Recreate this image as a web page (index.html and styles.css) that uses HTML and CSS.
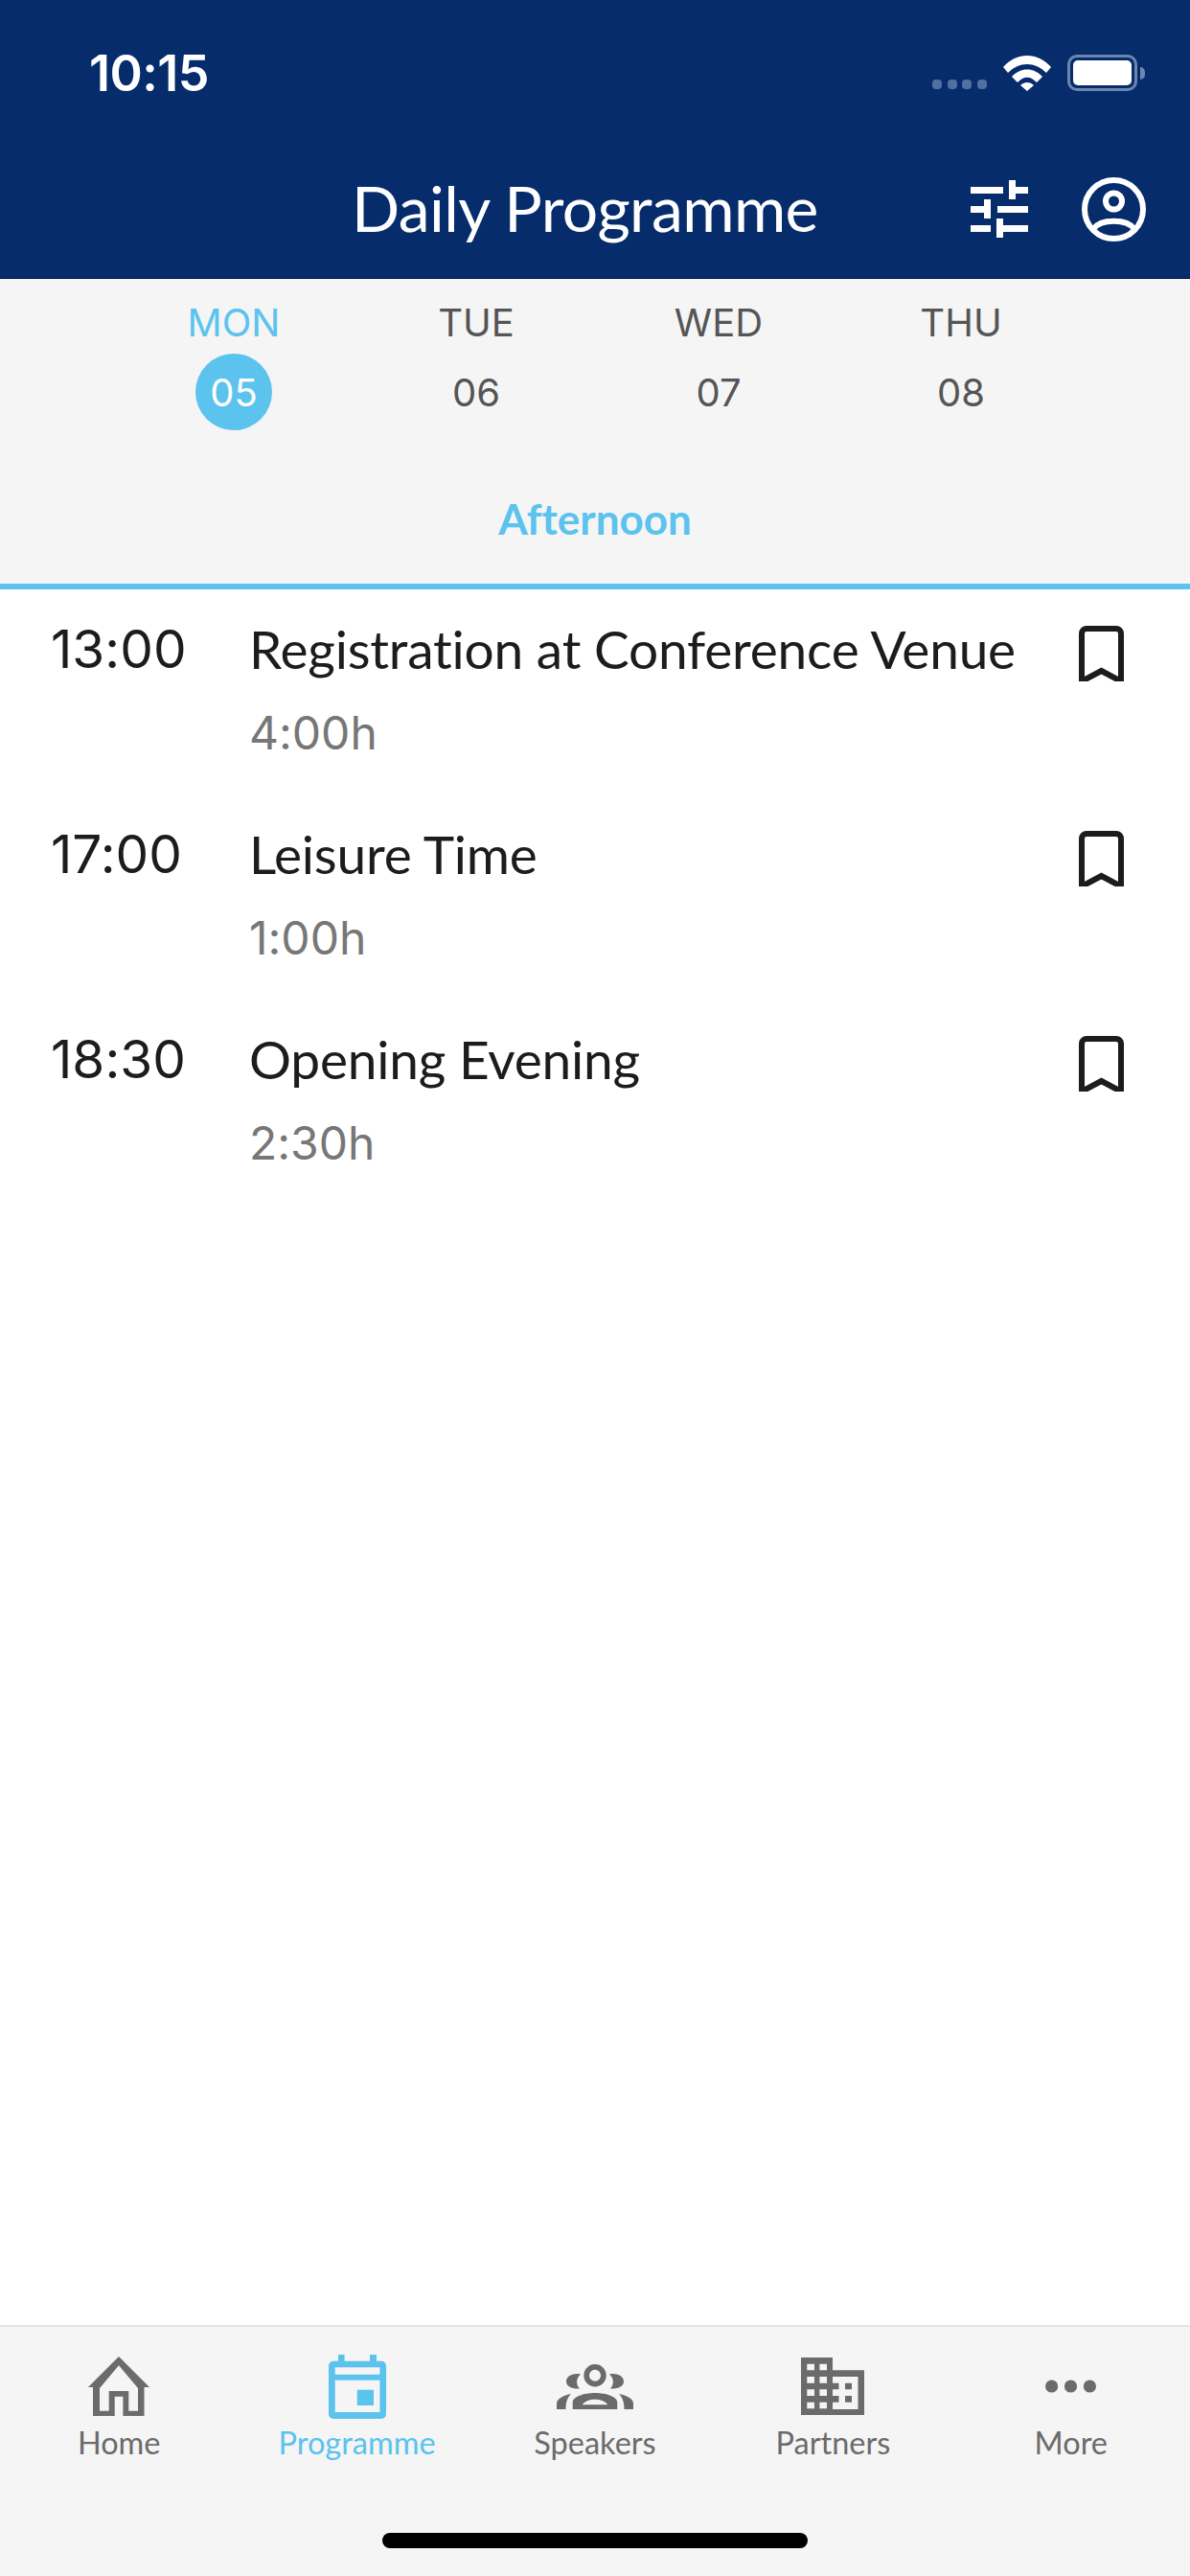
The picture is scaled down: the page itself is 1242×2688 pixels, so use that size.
FILE: index.html
```html
<!DOCTYPE html>
<html lang="en">

<head>
    <meta charset="UTF-8">
    <meta name="viewport" content="width=device-width, initial-scale=1.0">
    <title>Daily Programme</title>
    <link rel="stylesheet" href="styles.css">
</head>

<body>
    <div class="app">
        <!-- Header -->
        <header class="header">
            <div class="status-bar">
                <span class="clock">10:15</span>
                <div class="status-icons">
                    <div class="signal"><i></i><i></i><i></i><i></i></div>
                    <svg class="wifi" viewBox="0 0 50 37">
                        <path d="M0 12 C14 -4 36 -4 50 12 L45 18 C33 6 17 6 5 18 Z" />
                        <path d="M9 22 C18 12 32 12 41 22 L35 28 C28 21 22 21 15 28 Z" />
                        <path d="M18 31 C22 27 28 27 32 31 L25 37 Z" />
                    </svg>
                    <div class="battery"><div class="battery-fill"></div></div>
                    <div class="battery-tip"></div>
                </div>
            </div>
            <div class="title-bar">
                <h1>Daily Programme</h1>
                <svg class="filter-icon" viewBox="0 0 60 60">
                    <path d="M0 7h34v7H0zM40 0h7v7h13v7H47v6h-7z" />
                    <path d="M14 20h7v20h-7v-6H0v-7h14zM28 27h32v7H28z" />
                    <path d="M0 47h21v7H0zM27 40h7v7h26v7H34v6h-7z" />
                </svg>
                <svg class="user-icon" viewBox="0 0 67 67">
                    <circle cx="33.5" cy="33.5" r="30.5" />
                    <circle cx="33.5" cy="25" r="8.5" />
                    <path d="M12 54 C20 43 47 43 55 54" />
                </svg>
            </div>
        </header>

        <!-- Days -->
        <section class="days">
            <div class="day-row">
                <div class="day active"><span class="day-name">MON</span><span class="day-num">05</span></div>
                <div class="day"><span class="day-name">TUE</span><span class="day-num">06</span></div>
                <div class="day"><span class="day-name">WED</span><span class="day-num">07</span></div>
                <div class="day"><span class="day-name">THU</span><span class="day-num">08</span></div>
            </div>
            <div class="tab">Afternoon</div>
        </section>

        <!-- Sessions -->
        <main class="sessions">
            <div class="session">
                <div class="time">13:00</div>
                <div class="info">
                    <div class="session-title">Registration at Conference Venue</div>
                    <div class="duration">4:00h</div>
                </div>
                <svg class="bookmark" viewBox="0 0 47 58"><path d="M3 58V8a5 5 0 0 1 5-5h31a5 5 0 0 1 5 5v50L23.500 47z" /></svg>
            </div>
            <div class="session">
                <div class="time">17:00</div>
                <div class="info">
                    <div class="session-title">Leisure Time</div>
                    <div class="duration">1:00h</div>
                </div>
                <svg class="bookmark" viewBox="0 0 47 58"><path d="M3 58V8a5 5 0 0 1 5-5h31a5 5 0 0 1 5 5v50L23.500 47z" /></svg>
            </div>
            <div class="session">
                <div class="time">18:30</div>
                <div class="info">
                    <div class="session-title">Opening Evening</div>
                    <div class="duration">2:30h</div>
                </div>
                <svg class="bookmark" viewBox="0 0 47 58"><path d="M3 58V8a5 5 0 0 1 5-5h31a5 5 0 0 1 5 5v50L23.500 47z" /></svg>
            </div>
        </main>

        <!-- Tab bar -->
        <nav class="tabbar">
            <div class="tab-items">
                <div class="tab-item">
                    <div class="icon-box">
                        <svg class="icon-home" viewBox="0 0 64 62">
                            <path fill-rule="evenodd" d="M32 0L64 32H58.500V62H36.400V41.700H27.700V62H5V32H0Z M32 9.300L12 33V56.700H21.700V36H42.300V56.700H52V33Z" />
                        </svg>
                    </div>
                    <span>Home</span>
                </div>
                <div class="tab-item active">
                    <div class="icon-box">
                        <svg class="icon-calendar" viewBox="0 0 60 67">
                            <path fill-rule="evenodd" d="M10 0h6.600v6.700H43V0h7v6.700h5a5 5 0 0 1 5 5V62a5 5 0 0 1-5 5H5a5 5 0 0 1-5-5V11.700a5 5 0 0 1 5-5h5z M6.700 13.300v7.400h46.700v-7.400z M6.700 26.700V60h46.700V26.700z" />
                            <path d="M29.700 36.700H47V53H29.700z" />
                        </svg>
                    </div>
                    <span>Programme</span>
                </div>
                <div class="tab-item">
                    <div class="icon-box">
                        <svg class="icon-speakers" viewBox="0 0 80 47">
                            <path fill-rule="evenodd" d="M40 0a11.700 11.700 0 1 1 0 23.400 11.700 11.700 0 0 1 0-23.400z M40 5.700a6 6 0 1 0 0 12 6 6 0 0 0 0-12z" />
                            <path d="M25 10.500C18 9 10 12 10 18c0 5 6 8 14 7.500-4-4.500-4-10.500 1-15z" />
                            <path d="M55 10.500C62 9 70 12 70 18c0 5-6 8-14 7.500 4-4.500 4-10.500-1-15z" />
                            <path fill-rule="evenodd" d="M16.700 47V40C16.700 34 28 30 40 30s23.300 4 23.300 10v7z M26.700 42.300C32 35 48 35 53.300 42.300z" />
                            <path d="M0 47v-6c0-4 5-8 15-10-4 4-5.500 9-5.500 16z" />
                            <path d="M80 47v-6c0-4-5-8-15-10 4 4 5.500 9 5.500 16z" />
                        </svg>
                    </div>
                    <span>Speakers</span>
                </div>
                <div class="tab-item">
                    <div class="icon-box">
                        <svg class="icon-partners" viewBox="0 0 66 60">
                            <path fill-rule="evenodd" d="M0 0H33V13.300H66V60H0Z M6.300 6.700v6.600H14V6.700z M19.400 6.700v6.600H27V6.700z M6.300 20v6.700H14V20z M19.400 20v6.700H27V20z M6.300 33.300V40H14v-6.700z M19.400 33.300V40H27v-6.700z M6.300 46.700v6.600H14v-6.600z M19.400 46.700v6.600H27v-6.600z M33 20H59.500V54H33V46.700H39.500V40H33V33.300H39.500V26.700H33Z M46 26.700h7v6.600h-7z M46 40h7v6.700h-7z" />
                        </svg>
                    </div>
                    <span>Partners</span>
                </div>
                <div class="tab-item">
                    <div class="icon-box">
                        <svg class="icon-more" viewBox="0 0 53 14">
                            <circle cx="6.600" cy="7" r="6.600" />
                            <circle cx="26.500" cy="7" r="6.600" />
                            <circle cx="46.400" cy="7" r="6.600" />
                        </svg>
                    </div>
                    <span>More</span>
                </div>
            </div>
            <div class="home-indicator"></div>
        </nav>
    </div>
</body>

</html>
```

FILE: styles.css
```css
/* General Styles */
body {
    margin: 0;
    background: #fff;
    font-family: 'Lato', 'Open Sans', sans-serif;
    font-variant-ligatures: none;
}

.app {
    width: 1242px;
    height: 2688px;
    display: flex;
    flex-direction: column;
    overflow: hidden;
}

/* Header */
.header {
    height: 291px;
    background: #062c6c;
    color: #fff;
    box-sizing: border-box;
    border-bottom: 1px solid #000a50;
}

.status-bar {
    height: 150px;
    box-sizing: border-box;
    padding: 2px 47px 0 93px;
    display: flex;
    justify-content: space-between;
    align-items: center;
}

.clock {
    font-family: 'Inter', sans-serif;
    font-size: 52px;
    font-weight: 600;
    letter-spacing: -0.5px;
}

.status-icons {
    display: flex;
    align-items: center;
}

.signal {
    display: flex;
    gap: 5.6px;
    margin: 24px 17px 0 0;
}

.signal i {
    width: 10px;
    height: 10px;
    border-radius: 4px;
    background: #50709f;
}

.wifi {
    width: 50px;
    height: 37px;
    fill: #fff;
    margin-right: 17px;
}

.battery {
    width: 73px;
    height: 38px;
    box-sizing: border-box;
    border: 3px solid #6c86ae;
    border-radius: 10px;
    padding: 3px;
}

.battery-fill {
    height: 100%;
    background: #fff;
    border-radius: 5px;
}

.battery-tip {
    width: 5px;
    height: 13px;
    background: #6c86ae;
    border-radius: 0 6px 6px 0;
    margin-left: 3px;
}

.title-bar {
    height: 140px;
    box-sizing: border-box;
    padding: 0 46px 4px 0;
    display: flex;
    align-items: center;
}

h1 {
    margin: 0 0 4px 367px;
    font-size: 66px;
    font-weight: 400;
    letter-spacing: -0.6px;
    white-space: nowrap;
}

.filter-icon {
    width: 60px;
    height: 60px;
    fill: #fff;
    margin-left: auto;
    flex: none;
}

.user-icon {
    width: 67px;
    height: 67px;
    margin-left: 56px;
    fill: none;
    stroke: #fff;
    stroke-width: 6;
    flex: none;
}

/* Days */
.days {
    height: 324px;
    box-sizing: border-box;
    background: #f5f5f5;
    border-bottom: 6px solid #5bc3ee;
    display: flex;
    flex-direction: column;
}

.day-row {
    display: grid;
    grid-template-columns: repeat(4, 60px);
    column-gap: 193px;
    padding: 24px 0 0 214px;
}

.day {
    display: flex;
    flex-direction: column;
    align-items: center;
    font-family: 'Inter', sans-serif;
    color: #555;
}

.day-name {
    font-size: 40px;
    line-height: 44px;
}

.day-num {
    width: 80px;
    height: 80px;
    margin-top: 10px;
    border-radius: 50%;
    display: flex;
    align-items: center;
    justify-content: center;
    font-size: 40px;
    flex: none;
}

.day.active {
    color: #5bc3ee;
}

.day.active .day-num {
    background: #5bc3ee;
    color: #fff;
}

.tab {
    margin-top: 66px;
    text-align: center;
    font-size: 44px;
    line-height: 52px;
    font-weight: 700;
    color: #5bc3ee;
}

/* Sessions */
.sessions {
    flex: 1;
    padding-top: 28px;
}

.session {
    height: 214px;
    display: flex;
    align-items: flex-start;
    padding-left: 53px;
}

.time {
    width: 207px;
    font-family: 'Inter', sans-serif;
    font-size: 55px;
    line-height: 68px;
    color: #1c1c1c;
    flex: none;
}

.info {
    flex: 1;
}

.session-title {
    font-size: 55px;
    line-height: 68px;
    letter-spacing: -0.2px;
    color: #1c1c1c;
    white-space: nowrap;
}

.duration {
    margin-top: 24px;
    font-family: 'Inter', sans-serif;
    font-size: 48px;
    line-height: 60px;
    color: #777;
}

.bookmark {
    width: 47px;
    height: 58px;
    margin: 10px 69px 0 0;
    fill: none;
    stroke: #1c1c1c;
    stroke-width: 6;
    flex: none;
}

/* Tab bar */
.tabbar {
    height: 262px;
    box-sizing: border-box;
    background: #f5f5f5;
    border-top: 2px solid #e4e4e4;
    display: flex;
    flex-direction: column;
}

.tab-items {
    display: grid;
    grid-template-columns: repeat(5, 248.4px);
    padding-top: 28px;
}

.tab-item {
    display: flex;
    flex-direction: column;
    align-items: center;
    font-size: 32.5px;
    color: #6b6b6b;
}

.tab-item span {
    margin-top: 3px;
    line-height: 44px;
}

.tab-item.active {
    color: #5bc3ee;
}

.icon-box {
    height: 68px;
    display: flex;
    align-items: center;
    justify-content: center;
    fill: currentColor;
}

.icon-home {
    width: 64px;
    height: 62px;
}

.icon-calendar {
    width: 60px;
    height: 67px;
}

.icon-speakers {
    width: 80px;
    height: 47px;
}

.icon-partners {
    width: 66px;
    height: 60px;
}

.icon-more {
    width: 53px;
    height: 14px;
}

.home-indicator {
    width: 444px;
    height: 16px;
    margin: 72px auto 0;
    background: #000;
    border-radius: 8px;
}
```
